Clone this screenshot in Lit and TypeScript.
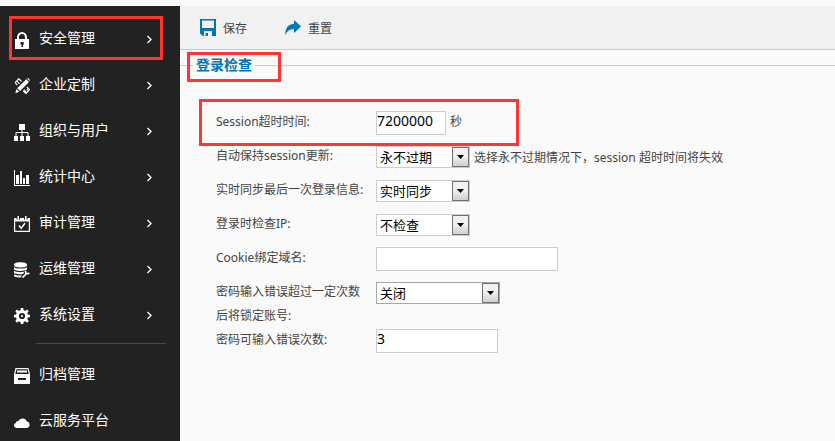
import { LitElement, html, css, svg, nothing } from "lit";
import { customElement, property, state } from "lit/decorators.js";

const icons: Record<string, unknown> = {
  lock: svg`<path d="M4 8V5.400a4 4.400 0 0 1 8 0V8" fill="none" stroke="currentColor" stroke-width="2"/><path fill="currentColor" fill-rule="evenodd" d="M1 7h14v10H1zM6.500 10v2.500h1V15h1.600v-2.500h.6V10z"/>`,
  design: svg`<path fill="currentColor" d="M12.2 1.200 15 4 6 13l-2.800-2.800zM2.400 11l2.800 2.800-3.900 1.500zM13 .5l1-.5 2 2-.5 1z"/><path d="M5.500 5.800 3 3.200M1 4.600 4.800.8l2.700 2.700M1 4.600l2.400 2.500M10 11.600l2.300 2.700M12.800 8.800l2.700 2.800-3.600 3.900-2.900-2.900M12.800 11l1 1" fill="none" stroke="currentColor" stroke-width="1.200"/>`,
  org: svg`<path fill="currentColor" d="M5 0h6v6H5zM0 12h4v5H0zM6 12h4v5H6zM12 12h4v5h-4z"/><path d="M8 6v6M2 12V8.500h12V12" fill="none" stroke="currentColor"/>`,
  chart: svg`<path fill="currentColor" d="M0 0h1v15h15v1H0zM2 5h3v9H2zM6 1h2v13H6zM9 8h2v6H9zM12 5h3v9h-3z"/>`,
  audit: svg`<path d="M.6 4v11.400h14.800V4" fill="none" stroke="currentColor" stroke-width="1.200"/><path fill="currentColor" d="M0 2h2.500v1.500h1V0h1.500v3.500h1V2h4v1.500h1V0h1.500v3.500h1V2H16v3.500H0z"/><path d="m5 9.500 2.200 2.700 3.800-5" fill="none" stroke="currentColor" stroke-width="1.600"/>`,
  database: svg`<path fill="currentColor" d="M0 2.400C0-.6 13-.6 13 2.400v1.200c0 2.600-13 2.600-13 0zM0 5.200c2 1.800 11 1.800 13 0v2c-1 2.300-13 2.300-13 0zM0 8.800c2 1.700 8 1.800 10.600.8L9 12c-3 .6-9 .2-9-1.400zM0 12.300c1.500 1.200 5 1.500 8 1.200L6.500 15.500C3 15.600 0 15 0 13.800z"/><path d="m8.500 15.600 4.300-4.400M11.800 8.800c-.8 2.200 1 3.700 3.700 2.300" fill="none" stroke="currentColor" stroke-width="1.600"/>`,
  gear: svg`<path fill="currentColor" fill-rule="evenodd" d="M6.800 0h2.400l.4 2.300 1.500.6 1.900-1.400 1.700 1.700-1.400 1.900.6 1.500 2.100.3v2.400l-2.100.3-.6 1.500 1.400 1.900-1.700 1.700-1.900-1.400-1.500.6L9.200 16H6.800l-.4-2.100-1.500-.6L3 14.700 1.300 13l1.400-1.900-.6-1.500L0 9.300V6.900l2.100-.3.6-1.500L1.300 3.200 3 1.500l1.900 1.400 1.500-.6zM8 4.900a3.100 3.100 0 1 0 0 6.200 3.100 3.100 0 0 0 0-6.200z"/><circle cx="8" cy="8" r="1.100" fill="currentColor"/>`,
  archive: svg`<path d="M.6 6 2 .6h12L15.400 6" fill="none" stroke="currentColor" stroke-width="1.200"/><path fill="currentColor" fill-rule="evenodd" d="M3 2.500h10v2H3zM0 6h16v10H0zM4 10v2h8v-2z"/>`,
  cloud: svg`<path fill="currentColor" d="M2.500 14a2.500 2.500 0 0 1-.7-4.900 2.400 2.400 0 0 1 2.500-2A4.600 4.600 0 0 1 12.800 7.500 3.300 3.300 0 0 1 12.900 14z"/>`,
  save: svg`<path fill="currentColor" fill-rule="evenodd" d="M0 0h16v17H3L0 14.500zM2 1.500V9h12V1.500zM4 12v5h1.500v-3H8v3h4v-5z"/>`,
  reset: svg`<path fill="currentColor" d="M9 0l7 6.500L9 13V9C5 8.800 2 11 .3 15 0 8.500 3 4 9 4z"/>`,
  chevron: svg`<path d="M1.500 1 5 4.500 1.500 8" fill="none" stroke="currentColor" stroke-width="1.300"/>`,
};

const icon = (name: string, w = 16, h = 16) =>
  html`<svg class="icon" width=${w} height=${h} viewBox="0 0 ${w} ${h}" aria-hidden="true">${icons[name]}</svg>`;

@customElement("side-menu")
export class SideMenu extends LitElement {
  @property() selected = "";

  static styles = css`
    :host { display: block; background: #222; color: #fff; overflow: hidden; padding-top: 8px; }
    .item {
      position: relative; display: flex; align-items: center; height: 46px;
      padding: 0 28px 0 14px; color: inherit; text-decoration: none; font-size: 14px;
    }
    .item .icon { flex: none; margin: 6px 9px 0 0; }
    .label { flex: 1; }
    .item .arrow { display: flex; }
    .item .arrow .icon { margin: 4px 0 0; }
    .marked::after {
      content: ""; position: absolute; inset: 2px 17px 0 9px; border: 3px solid #ff3636;
    }
    .divider { border: 0; border-top: 1px solid #484848; margin: 7px 14px 6px 36px; }
  `;

  private item(name: string, label: string, sub: boolean) {
    const tall = name === "lock" || name === "org";
    return html`<a class="item ${label === this.selected ? "marked" : ""}" href="#${name}">
      ${icon(name, 16, tall ? 17 : 16)}<span class="label">${label}</span>
      ${sub ? html`<span class="arrow">${icon("chevron", 6, 9)}</span>` : nothing}
    </a>`;
  }

  render() {
    return html`<nav>
      ${this.item("lock", "安全管理", true)}
      ${this.item("design", "企业定制", true)}
      ${this.item("org", "组织与用户", true)}
      ${this.item("chart", "统计中心", true)}
      ${this.item("audit", "审计管理", true)}
      ${this.item("database", "运维管理", true)}
      ${this.item("gear", "系统设置", true)}
      <hr class="divider" />
      ${this.item("archive", "归档管理", false)}
      ${this.item("cloud", "云服务平台", false)}
    </nav>`;
  }
}

interface Field {
  id: string;
  label: string;
  kind: "text" | "select";
  size: "xs" | "s" | "m" | "l";
  value: string;
  note?: string;
  marked?: boolean;
}

@customElement("login-form")
export class LoginForm extends LitElement {
  @state() private fields: Field[] = [
    { id: "timeout", label: "Session超时时间:", kind: "text", size: "xs", value: "7200000", note: "秒", marked: true },
    { id: "keep", label: "自动保持session更新:", kind: "select", size: "s", value: "永不过期", note: "选择永不过期情况下，session 超时时间将失效" },
    { id: "sync", label: "实时同步最后一次登录信息:", kind: "select", size: "s", value: "实时同步" },
    { id: "ip", label: "登录时检查IP:", kind: "select", size: "s", value: "不检查" },
    { id: "cookie", label: "Cookie绑定域名:", kind: "text", size: "l", value: "" },
    { id: "lock", label: "密码输入错误超过一定次数后将锁定账号:", kind: "select", size: "m", value: "关闭" },
    { id: "tries", label: "密码可输入错误次数:", kind: "text", size: "m", value: "3" },
  ];

  static styles = css`
    :host { display: block; color: #444; font-size: 12px; }
    .group { margin: 0; padding: 30px 0 0; border: 0; border-top: 1px solid #ccc; min-width: 0; }
    .title {
      position: relative; margin-left: 13px; padding: 0 3px; line-height: 30px;
      font-size: 14px; font-weight: bold; color: #0077b9;
    }
    .title::after {
      content: ""; position: absolute; inset: 2px -26px -2px -6px; border: 3px solid #ff3636;
    }
    .row {
      position: relative; display: grid; grid-template-columns: 150px 1fr; column-gap: 10px;
      align-items: start; min-height: 34px; padding-left: 36px; line-height: 24px;
    }
    .marked::after {
      content: ""; position: absolute; top: -11px; left: 19px; width: 314px; height: 41px;
      border: 3px solid #ff3636; pointer-events: none;
    }
    .field { display: flex; align-items: flex-start; gap: 4px; }
    .text, .choice {
      box-sizing: border-box; font-family: inherit; color: #000; background: #fff;
      border: 1px solid #ccc; border-radius: 0;
    }
    .text { height: 24px; margin: 1px 0 0; padding: 0 0 6px; font-size: 14px; }
    .picker { position: relative; display: flex; height: 22px; margin-top: 2px; }
    .choice { appearance: none; width: 100%; height: 22px; margin: 0; padding: 0 20px 0 3px; font-size: 13px; }
    .picker.m .choice { border-color: #a5a5ab; }
    .knob {
      position: absolute; top: 1px; right: 1px; bottom: 1px; width: 17px; box-sizing: border-box;
      display: flex; align-items: center; justify-content: center; pointer-events: none;
      border: 1px solid #707070; background: linear-gradient(#f2f2f2 45%, #cfcfcf);
    }
    .xs { width: 70px; }
    .s { width: 94px; }
    .m { width: 124px; }
    .text.m { width: 122px; }
    .l { width: 182px; }
    .note { white-space: nowrap; }
    .picker + .note { margin-top: 2px; }
  `;

  private control(f: Field) {
    if (f.kind === "text") {
      return html`<input class="text ${f.size}" id=${f.id} type="text" .value=${f.value} />`;
    }
    return html`<span class="picker ${f.size}">
      <select class="choice" id=${f.id}><option selected>${f.value}</option></select>
      <span class="knob"><svg width="7" height="4" viewBox="0 0 7 4" aria-hidden="true"><path d="M0 0h7L3.500 4z" /></svg></span>
    </span>`;
  }

  render() {
    return html`<fieldset class="group">
      <legend class="title">登录检查</legend>
      ${this.fields.map((f) => html`<div class="row ${f.marked ? "marked" : ""}">
        <label for=${f.id}>${f.label}</label>
        <div class="field">${this.control(f)}${f.note ? html`<span class="note">${f.note}</span>` : nothing}</div>
      </div>`)}
    </fieldset>`;
  }
}

@customElement("app-root")
export class AppRoot extends LitElement {
  static styles = css`
    :host {
      display: grid; grid-template-columns: 180px 1fr; box-sizing: border-box; height: 100vh;
      padding-top: 6px; background: #fafafa;
      font-family: "Noto Sans", "Noto Sans CJK SC", sans-serif;
    }
    .main { min-width: 0; overflow: auto; }
    .toolbar {
      display: flex; gap: 38px; height: 43px; padding-left: 20px;
      background: #f1f1f1; border-bottom: 1px solid #ccc;
    }
    .tool {
      display: flex; align-items: center; gap: 7px; padding: 0; border: 0; background: none;
      color: #444; font: inherit; font-size: 12px; cursor: pointer;
    }
    .tool .icon { color: #0077b9; }
  `;

  render() {
    return html`
      <side-menu selected="安全管理"></side-menu>
      <main class="main">
        <div class="toolbar">
          <button class="tool" type="button">${icon("save", 16, 17)}保存</button>
          <button class="tool" type="button">${icon("reset", 16, 15)}重置</button>
        </div>
        <login-form></login-form>
      </main>
    `;
  }
}
